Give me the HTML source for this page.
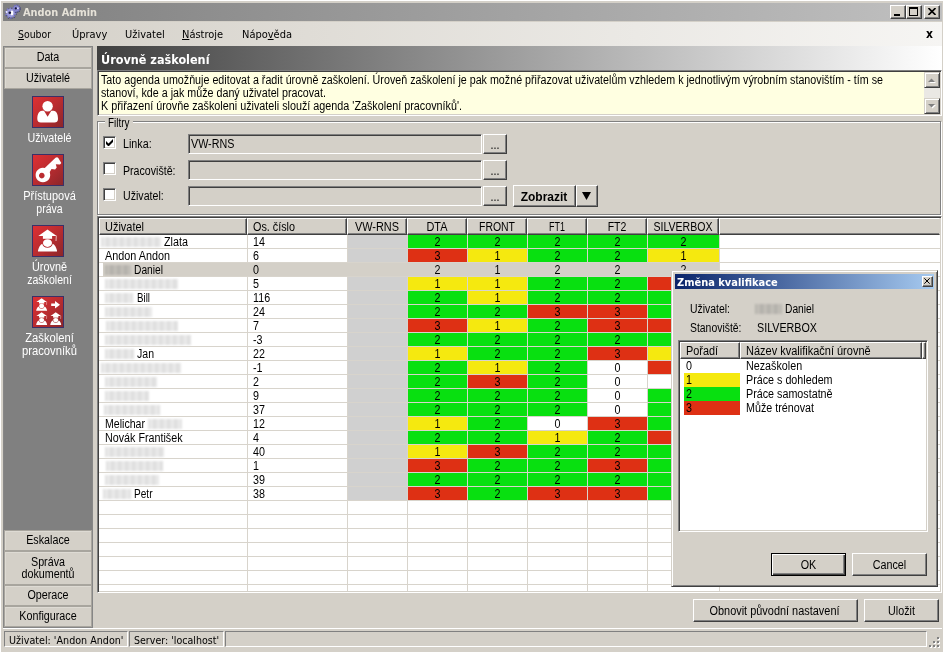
<!DOCTYPE html>
<html><head><meta charset="utf-8"><title>Andon Admin</title>
<style>
html,body{margin:0;padding:0;}
body{width:943px;height:652px;background:#D4D0C8;position:relative;overflow:hidden;font-family:"Liberation Sans","DejaVu Sans",sans-serif;font-size:12px;color:#000;}
div{position:absolute;box-sizing:border-box;}
svg{position:absolute;}
.t{white-space:nowrap;line-height:14px;height:14px;transform-origin:0 50%;}
.t.c{text-align:center;transform-origin:50% 50%;}
.ms{font-family:"Liberation Sans",sans-serif;font-size:12px;}
.msb{font-family:"Liberation Sans",sans-serif;font-size:12px;font-weight:bold;}
.th{font-family:"DejaVu Sans Condensed","Liberation Sans",sans-serif;font-size:11px;}
.thb{font-family:"DejaVu Sans Condensed","Liberation Sans",sans-serif;font-size:11px;font-weight:bold;}
.thb12{font-family:"DejaVu Sans Condensed","Liberation Sans",sans-serif;font-size:12px;font-weight:bold;}
.thb13{font-family:"DejaVu Sans Condensed","Liberation Sans",sans-serif;font-size:13px;font-weight:bold;}
.btn{background:#D4D0C8;border:1px solid;border-color:#fff #404040 #404040 #fff;box-shadow:inset -1px -1px 0 #808080;}
.sunk{border:1px solid;border-color:#808080 #fff #fff #808080;box-shadow:inset 1px 1px 0 #404040, inset -1px -1px 0 #D4D0C8;}
.sbtn{background:#D4D0C8;border:1px solid;border-color:#D4D0C8 #404040 #404040 #D4D0C8;box-shadow:inset 1px 1px 0 #fff, inset -1px -1px 0 #808080;}
.hdr{background:#D4D0C8;border:1px solid;border-color:#fff #404040 #404040 #fff;box-shadow:inset -1px -1px 0 #808080;}
.pbtn{background:#D4D0C8;border:1px solid #A8A59E;box-shadow:inset 1px 1px 0 #DEDBD4;}
.blur{filter:blur(1.3px);}
u{text-decoration:underline;}
</style></head><body>
<div style="left:0px;top:0px;width:943px;height:1px;background:#fff"></div>
<div style="left:0px;top:0px;width:1px;height:652px;background:#fff"></div>
<div style="left:3px;top:3px;width:939px;height:18px;background:linear-gradient(to right,#808080 0%,#C0C0C0 100%)"></div>
<svg style="left:4px;top:4px" width="18" height="16" viewBox="0 0 18 16">
<circle cx="12.7" cy="4.8" r="3.1" fill="none" stroke="#2C2C5C" stroke-width="1.8" stroke-dasharray="1.2 0.75"/>
<circle cx="6.9" cy="9.4" r="4.6" fill="none" stroke="#2C2C5C" stroke-width="2.2" stroke-dasharray="1.6 1.29"/>
<circle cx="12.4" cy="4.4" r="3.1" fill="none" stroke="#7474BC" stroke-width="1.8" stroke-dasharray="1.2 0.75"/>
<circle cx="12.4" cy="4.4" r="2.8" fill="#8888D0"/>
<circle cx="6.6" cy="9" r="4.6" fill="none" stroke="#8080C4" stroke-width="2.2" stroke-dasharray="1.6 1.29"/>
<circle cx="6.6" cy="9" r="4.2" fill="#9898DA"/>
<ellipse cx="7.9" cy="9" rx="1.5" ry="2.4" fill="#fff"/>
<circle cx="2.6" cy="8" r="1" fill="#ECECFF"/>
<circle cx="5.8" cy="8.8" r="1.3" fill="#14143A"/>
<circle cx="11.8" cy="4.4" r="1.1" fill="#14143A"/>
<circle cx="13.9" cy="4.2" r="0.9" fill="#DADAF8"/>
</svg>
<div class="t thb" style="top:6px;color:#E6E2D8;left:23px;transform:scaleX(0.9922);">Andon Admin</div>
<div class="btn" style="left:890px;top:5px;width:16px;height:14px;"></div>
<div class="btn" style="left:906px;top:5px;width:16px;height:14px;"></div>
<div class="btn" style="left:924px;top:5px;width:16px;height:14px;"></div>
<div style="left:894px;top:14px;width:6px;height:2px;background:#000"></div>
<div style="left:909px;top:7px;width:9px;height:9px;border:1px solid #000;border-top:2px solid #000"></div>
<svg style="left:928px;top:8px" width="8" height="7" viewBox="0 0 8 7"><path d="M0.5 0 L7.5 7 M7.5 0 L0.5 7" stroke="#000" stroke-width="1.6"/></svg>
<div style="left:3px;top:22px;width:939px;height:24px;background:linear-gradient(to right,#D4D0C8 0%,#F6F5F3 100%)"></div>
<div class="t th" style="top:28px;left:18px;transform:scaleX(0.9420);"><u>S</u>oubor</div>
<div class="t th" style="top:28px;left:72px;transform:scaleX(0.9980);">Úpravy</div>
<div class="t th" style="top:28px;left:125px;transform:scaleX(0.9980);">Uživatel</div>
<div class="t th" style="top:28px;left:182px;transform:scaleX(0.9980);"><u>N</u>ástroje</div>
<div class="t th" style="top:28px;left:242px;transform:scaleX(0.9980);">Nápo<u>v</u>ěda</div>
<div class="t thb12" style="top:27px;left:926px;transform:scaleX(0.9980);">x</div>
<div style="left:3px;top:46px;width:90px;height:582px;background:#808080;border:1px solid #868686"></div>
<div class="pbtn" style="left:4px;top:47px;width:88px;height:21px;"></div>
<div class="t ms c" style="top:50px;left:4px;width:88px;transform:scaleX(0.8950);">Data</div>
<div class="pbtn" style="left:4px;top:68px;width:88px;height:21px;"></div>
<div class="t ms c" style="top:71px;left:4px;width:88px;transform:scaleX(0.8950);">Uživatelé</div>
<div class="pbtn" style="left:4px;top:530px;width:88px;height:21px;"></div>
<div class="t ms c" style="top:533px;left:4px;width:88px;transform:scaleX(0.8950);">Eskalace</div>
<div class="pbtn" style="left:4px;top:551px;width:88px;height:34px;"></div>
<div class="t ms c" style="top:555px;left:4px;width:88px;transform:scaleX(0.8950);">Správa</div>
<div class="t ms c" style="top:567px;left:4px;width:88px;transform:scaleX(0.8950);">dokumentů</div>
<div class="pbtn" style="left:4px;top:585px;width:88px;height:21px;"></div>
<div class="t ms c" style="top:588px;left:4px;width:88px;transform:scaleX(0.8950);">Operace</div>
<div class="pbtn" style="left:4px;top:606px;width:88px;height:21px;"></div>
<div class="t ms c" style="top:609px;left:4px;width:88px;transform:scaleX(0.8950);">Konfigurace</div>
<div style="left:32px;top:96px;width:32px;height:32px;border:1px solid #3A3068;background:linear-gradient(135deg,#DE3034 0%,#BA2C30 50%,#8C262A 100%)"></div>
<svg style="left:32px;top:96px" width="32" height="32" viewBox="0 0 32 32" fill="#fff"><circle cx="15.6" cy="10.2" r="5.2"/><path d="M5.3 23 C5.3 17.5 7.5 14.8 10 14.8 L12 14.8 L15.6 20.8 L19.3 14.8 L21.5 14.8 C24 14.8 26 17.5 26 23 C26 25.5 24.5 26.5 22.5 26.5 L8.8 26.5 C6.8 26.5 5.3 25.5 5.3 23 Z"/></svg>
<div style="left:32px;top:154px;width:32px;height:32px;border:1px solid #3A3068;background:linear-gradient(135deg,#DE3034 0%,#BA2C30 50%,#8C262A 100%)"></div>
<svg style="left:32px;top:154px" width="32" height="32" viewBox="0 0 32 32" fill="#fff"><path d="M10.9 13.7 a7.3 7.3 0 1 0 0.01 0 Z M9.8 18.8 a2.8 2.8 0 1 1 -0.01 0 Z" fill-rule="evenodd"/><path d="M12.5 14.3 L23.5 3.8 Q25.3 2.5 26.3 4.1 L29.3 9 L28 10.4 L23.8 10.3 L24.7 13.6 L23.1 15.6 L19.5 14.9 L17 19.2 Z"/></svg>
<div style="left:32px;top:225px;width:32px;height:32px;border:1px solid #3A3068;background:linear-gradient(135deg,#DE3034 0%,#BA2C30 50%,#8C262A 100%)"></div>
<svg style="left:32px;top:225px" width="32" height="32" viewBox="0 0 32 32" fill="#fff"><path d="M15.5 4.5 L24.7 10.9 L6.3 10.9 Z"/><rect x="10.9" y="10.9" width="9.2" height="2.9"/><path d="M24.3 10.8 L24 16" stroke="#fff" stroke-opacity="0.75" stroke-width="0.9" fill="none"/><path d="M6 26.5 L6 25.6 C6.8 22 8.2 20 10.2 18.8 A5.5 5.3 0 0 0 20.8 18.8 C22.8 20 24.2 22 25 25.6 L25 26.5 Z"/><ellipse cx="15.5" cy="18.1" rx="4.5" ry="3.9"/></svg>
<div style="left:32px;top:296px;width:32px;height:32px;border:1px solid #3A3068;background:linear-gradient(135deg,#DE3034 0%,#BA2C30 50%,#8C262A 100%)"></div>
<svg style="left:32px;top:296px" width="32" height="32" viewBox="0 0 32 32" fill="#fff"><g transform="translate(0.8,-0.3) scale(0.57)"><path d="M15.5 4.5 L24.7 10.9 L6.3 10.9 Z"/><rect x="10.9" y="10.9" width="9.2" height="2.9"/><path d="M24.3 10.8 L24 16" stroke="#fff" stroke-opacity="0.75" stroke-width="0.9" fill="none"/><path d="M6 26.5 L6 25.6 C6.8 22 8.2 20 10.2 18.8 A5.5 5.3 0 0 0 20.8 18.8 C22.8 20 24.2 22 25 25.6 L25 26.5 Z"/><ellipse cx="15.5" cy="18.1" rx="4.5" ry="3.9"/></g><g transform="translate(0.8,13.8) scale(0.57)"><path d="M15.5 4.5 L24.7 10.9 L6.3 10.9 Z"/><rect x="10.9" y="10.9" width="9.2" height="2.9"/><path d="M24.3 10.8 L24 16" stroke="#fff" stroke-opacity="0.75" stroke-width="0.9" fill="none"/><path d="M6 26.5 L6 25.6 C6.8 22 8.2 20 10.2 18.8 A5.5 5.3 0 0 0 20.8 18.8 C22.8 20 24.2 22 25 25.6 L25 26.5 Z"/><ellipse cx="15.5" cy="18.1" rx="4.5" ry="3.9"/></g><g transform="translate(14.9,13.8) scale(0.57)"><path d="M15.5 4.5 L24.7 10.9 L6.3 10.9 Z"/><rect x="10.9" y="10.9" width="9.2" height="2.9"/><path d="M24.3 10.8 L24 16" stroke="#fff" stroke-opacity="0.75" stroke-width="0.9" fill="none"/><path d="M6 26.5 L6 25.6 C6.8 22 8.2 20 10.2 18.8 A5.5 5.3 0 0 0 20.8 18.8 C22.8 20 24.2 22 25 25.6 L25 26.5 Z"/><ellipse cx="15.5" cy="18.1" rx="4.5" ry="3.9"/></g><path d="M19.2 7.5 L23 7.5 L23 5 L28 8.7 L23 12.4 L23 9.9 L19.2 9.9 Z"/></svg>
<div class="t ms c" style="top:131px;color:#fff;left:5px;width:89px;transform:scaleX(0.8914);">Uživatelé</div>
<div class="t ms c" style="top:189px;color:#fff;left:5px;width:89px;transform:scaleX(0.9168);">Přístupová</div>
<div class="t ms c" style="top:202px;color:#fff;left:5px;width:89px;transform:scaleX(0.8791);">práva</div>
<div class="t ms c" style="top:260px;color:#fff;left:5px;width:89px;transform:scaleX(0.9047);">Úrovně</div>
<div class="t ms c" style="top:273px;color:#fff;left:5px;width:89px;transform:scaleX(0.8816);">zaškolení</div>
<div class="t ms c" style="top:331px;color:#fff;left:5px;width:89px;transform:scaleX(0.9321);">Zaškolení</div>
<div class="t ms c" style="top:344px;color:#fff;left:5px;width:89px;transform:scaleX(0.9369);">pracovníků</div>
<div style="left:97px;top:46px;width:845px;height:24px;background:linear-gradient(to right,#404040 0%,#FFFFFF 100%)"></div>
<div class="t thb13" style="top:53px;color:#fff;left:101px;transform:scaleX(0.9631);">Úrovně zaškolení</div>
<div class="sunk" style="left:97px;top:70px;width:845px;height:46px;background:#FFFFE1;"></div>
<div class="t ms" style="top:73px;left:101px;transform:scaleX(0.8929);">Tato agenda umožňuje editovat a řadit úrovně zaškolení. Úroveň zaškolení je pak možné přiřazovat uživatelům vzhledem k jednotlivým výrobním stanovištím - tím se</div>
<div class="t ms" style="top:86px;left:101px;transform:scaleX(0.8924);">stanoví, kde a jak může daný uživatel pracovat.</div>
<div class="t ms" style="top:99px;left:101px;transform:scaleX(0.8992);">K přiřazení úrovňe zaškoleni uživateli slouží agenda 'Zaškolení pracovníků'.</div>
<div style="left:924px;top:72px;width:16px;height:42px;background:#EAE8E4"></div>
<div class="sbtn" style="left:924px;top:72px;width:16px;height:16px;"></div>
<div class="sbtn" style="left:924px;top:98px;width:16px;height:16px;"></div>
<svg style="left:928px;top:78px" width="9" height="5" viewBox="0 0 9 5"><path d="M1.5 5 L4.5 2 L8 5 Z" fill="#fff"/><path d="M0 4 L3.5 0.5 L7 4 Z" fill="#808080"/></svg>
<svg style="left:928px;top:104px" width="9" height="5" viewBox="0 0 9 5"><path d="M1 1 L8 1 L4.5 4.5 Z" fill="#fff"/><path d="M0 0 L7 0 L3.5 3.5 Z" fill="#808080"/></svg>
<div style="left:97px;top:121px;width:844px;height:94px;border:1px solid #808080;box-shadow:1px 1px 0 #fff, inset 1px 1px 0 #fff;"></div>
<div style="left:105px;top:116px;width:28px;height:13px;background:#D4D0C8"></div>
<div class="t ms" style="top:116px;left:108px;transform:scaleX(0.8269);">Filtry</div>
<div class="sunk" style="left:103px;top:136px;width:13px;height:13px;background:#fff;"></div>
<svg style="left:106px;top:139px" width="7" height="7" viewBox="0 0 7 7"><path d="M0 2 L0 5 L2 7 L3 7 L7 3 L7 0 L2.5 4.5 Z" fill="#000"/></svg>
<div class="t ms" style="top:137px;left:123px;transform:scaleX(0.8950);">Linka:</div>
<div class="sunk" style="left:188px;top:134px;width:294px;height:20px;background:#D4D0C8;"></div>
<div class="t ms" style="top:137px;left:191px;transform:scaleX(0.8950);">VW-RNS</div>
<div class="btn" style="left:483px;top:134px;width:24px;height:20px;"></div>
<div class="t ms c" style="top:138px;left:483px;width:24px;transform:scaleX(0.8950);">...</div>
<div class="sunk" style="left:103px;top:162px;width:13px;height:13px;background:#fff;"></div>
<div class="t ms" style="top:164px;left:123px;transform:scaleX(0.8844);">Pracoviště:</div>
<div class="sunk" style="left:188px;top:160px;width:294px;height:20px;background:#D4D0C8;"></div>
<div class="btn" style="left:483px;top:160px;width:24px;height:20px;"></div>
<div class="t ms c" style="top:164px;left:483px;width:24px;transform:scaleX(0.8950);">...</div>
<div class="sunk" style="left:103px;top:188px;width:13px;height:13px;background:#fff;"></div>
<div class="t ms" style="top:189px;left:123px;transform:scaleX(0.8845);">Uživatel:</div>
<div class="sunk" style="left:188px;top:186px;width:294px;height:20px;background:#D4D0C8;"></div>
<div class="btn" style="left:483px;top:186px;width:24px;height:20px;"></div>
<div class="t ms c" style="top:190px;left:483px;width:24px;transform:scaleX(0.8950);">...</div>
<div class="btn" style="left:513px;top:185px;width:63px;height:22px;"></div>
<div class="t msb c" style="top:190px;left:513px;width:62px;transform:scaleX(0.9980);">Zobrazit</div>
<div class="btn" style="left:576px;top:185px;width:22px;height:22px;"></div>
<svg style="left:582px;top:192px" width="9" height="8" viewBox="0 0 9 8"><path d="M0 0 L9 0 L4.5 8 Z" fill="#000"/></svg>
<div class="sunk" style="left:97px;top:216px;width:845px;height:377px;background:#fff;"></div>
<div class="hdr" style="left:99px;top:218px;width:148px;height:17px;"></div>
<div class="t ms" style="top:220px;left:105px;transform:scaleX(0.9136);">Uživatel</div>
<div class="hdr" style="left:247px;top:218px;width:100px;height:17px;"></div>
<div class="t ms" style="top:220px;left:253px;transform:scaleX(0.8996);">Os. číslo</div>
<div class="hdr" style="left:347px;top:218px;width:60px;height:17px;"></div>
<div class="t ms c" style="top:220px;left:347px;width:60px;transform:scaleX(0.9081);">VW-RNS</div>
<div class="hdr" style="left:407px;top:218px;width:60px;height:17px;"></div>
<div class="t ms c" style="top:220px;left:407px;width:60px;transform:scaleX(0.9087);">DTA</div>
<div class="hdr" style="left:467px;top:218px;width:60px;height:17px;"></div>
<div class="t ms c" style="top:220px;left:467px;width:60px;transform:scaleX(0.8711);">FRONT</div>
<div class="hdr" style="left:527px;top:218px;width:60px;height:17px;"></div>
<div class="t ms c" style="top:220px;left:527px;width:60px;transform:scaleX(0.7496);">FT1</div>
<div class="hdr" style="left:587px;top:218px;width:60px;height:17px;"></div>
<div class="t ms c" style="top:220px;left:587px;width:60px;transform:scaleX(0.8761);">FT2</div>
<div class="hdr" style="left:647px;top:218px;width:72px;height:17px;"></div>
<div class="t ms c" style="top:220px;left:647px;width:72px;transform:scaleX(0.8788);">SILVERBOX</div>
<div class="hdr" style="left:719px;top:218px;width:221px;height:17px;border-right-color:#D4D0C8;box-shadow:inset 0 -1px 0 #808080;"></div>
<div style="left:99px;top:248px;width:841px;height:1px;background:#D8D4CC"></div>
<div style="left:99px;top:262px;width:841px;height:1px;background:#D8D4CC"></div>
<div style="left:99px;top:276px;width:841px;height:1px;background:#D8D4CC"></div>
<div style="left:99px;top:290px;width:841px;height:1px;background:#D8D4CC"></div>
<div style="left:99px;top:304px;width:841px;height:1px;background:#D8D4CC"></div>
<div style="left:99px;top:318px;width:841px;height:1px;background:#D8D4CC"></div>
<div style="left:99px;top:332px;width:841px;height:1px;background:#D8D4CC"></div>
<div style="left:99px;top:346px;width:841px;height:1px;background:#D8D4CC"></div>
<div style="left:99px;top:360px;width:841px;height:1px;background:#D8D4CC"></div>
<div style="left:99px;top:374px;width:841px;height:1px;background:#D8D4CC"></div>
<div style="left:99px;top:388px;width:841px;height:1px;background:#D8D4CC"></div>
<div style="left:99px;top:402px;width:841px;height:1px;background:#D8D4CC"></div>
<div style="left:99px;top:416px;width:841px;height:1px;background:#D8D4CC"></div>
<div style="left:99px;top:430px;width:841px;height:1px;background:#D8D4CC"></div>
<div style="left:99px;top:444px;width:841px;height:1px;background:#D8D4CC"></div>
<div style="left:99px;top:458px;width:841px;height:1px;background:#D8D4CC"></div>
<div style="left:99px;top:472px;width:841px;height:1px;background:#D8D4CC"></div>
<div style="left:99px;top:486px;width:841px;height:1px;background:#D8D4CC"></div>
<div style="left:99px;top:500px;width:841px;height:1px;background:#D8D4CC"></div>
<div style="left:99px;top:514px;width:841px;height:1px;background:#D8D4CC"></div>
<div style="left:99px;top:528px;width:841px;height:1px;background:#D8D4CC"></div>
<div style="left:99px;top:542px;width:841px;height:1px;background:#D8D4CC"></div>
<div style="left:99px;top:556px;width:841px;height:1px;background:#D8D4CC"></div>
<div style="left:99px;top:570px;width:841px;height:1px;background:#D8D4CC"></div>
<div style="left:99px;top:584px;width:841px;height:1px;background:#D8D4CC"></div>
<div style="left:247px;top:235px;width:1px;height:356px;background:#D8D4CC"></div>
<div style="left:347px;top:235px;width:1px;height:356px;background:#D8D4CC"></div>
<div style="left:407px;top:235px;width:1px;height:356px;background:#D8D4CC"></div>
<div style="left:467px;top:235px;width:1px;height:356px;background:#D8D4CC"></div>
<div style="left:527px;top:235px;width:1px;height:356px;background:#D8D4CC"></div>
<div style="left:587px;top:235px;width:1px;height:356px;background:#D8D4CC"></div>
<div style="left:647px;top:235px;width:1px;height:356px;background:#D8D4CC"></div>
<div style="left:719px;top:235px;width:1px;height:356px;background:#D8D4CC"></div>
<div style="left:348px;top:235px;width:59px;height:13px;background:#D0D0D0"></div>
<div class="blur" style="left:101px;top:237px;width:60px;height:10px;background:repeating-linear-gradient(90deg,#DCDCDC 0,#ECECEC 3px,#DCDCDC 7px);"></div>
<div class="t ms" style="top:235px;left:164px;transform:scaleX(0.8993);">Zlata</div>
<div class="t ms" style="top:235px;left:253px;transform:scaleX(0.8950);">14</div>
<div style="left:408px;top:235px;width:59px;height:13px;background:#08E010"></div>
<div class="t ms c" style="top:235px;left:408px;width:59px;transform:scaleX(0.8950);">2</div>
<div style="left:468px;top:235px;width:59px;height:13px;background:#08E010"></div>
<div class="t ms c" style="top:235px;left:468px;width:59px;transform:scaleX(0.8950);">2</div>
<div style="left:528px;top:235px;width:59px;height:13px;background:#08E010"></div>
<div class="t ms c" style="top:235px;left:528px;width:59px;transform:scaleX(0.8950);">2</div>
<div style="left:588px;top:235px;width:59px;height:13px;background:#08E010"></div>
<div class="t ms c" style="top:235px;left:588px;width:59px;transform:scaleX(0.8950);">2</div>
<div style="left:648px;top:235px;width:71px;height:13px;background:#08E010"></div>
<div class="t ms c" style="top:235px;left:648px;width:71px;transform:scaleX(0.8950);">2</div>
<div style="left:348px;top:249px;width:59px;height:13px;background:#D0D0D0"></div>
<div class="t ms" style="top:249px;left:105px;transform:scaleX(0.9018);">Andon Andon</div>
<div class="t ms" style="top:249px;left:253px;transform:scaleX(0.8950);">6</div>
<div style="left:408px;top:249px;width:59px;height:13px;background:#DE3014"></div>
<div class="t ms c" style="top:249px;left:408px;width:59px;transform:scaleX(0.8950);">3</div>
<div style="left:468px;top:249px;width:59px;height:13px;background:#F5E90F"></div>
<div class="t ms c" style="top:249px;left:468px;width:59px;transform:scaleX(0.8950);">1</div>
<div style="left:528px;top:249px;width:59px;height:13px;background:#08E010"></div>
<div class="t ms c" style="top:249px;left:528px;width:59px;transform:scaleX(0.8950);">2</div>
<div style="left:588px;top:249px;width:59px;height:13px;background:#08E010"></div>
<div class="t ms c" style="top:249px;left:588px;width:59px;transform:scaleX(0.8950);">2</div>
<div style="left:648px;top:249px;width:71px;height:13px;background:#F5E90F"></div>
<div class="t ms c" style="top:249px;left:648px;width:71px;transform:scaleX(0.8950);">1</div>
<div style="left:103px;top:263px;width:616px;height:13px;background:#D4D0C8"></div>
<div class="blur" style="left:105px;top:265px;width:26px;height:10px;background:repeating-linear-gradient(90deg,#B0AEA8 0,#C4C1BA 3px,#B0AEA8 7px);"></div>
<div class="t ms" style="top:263px;left:134px;transform:scaleX(0.8522);">Daniel</div>
<div class="t ms" style="top:263px;left:253px;transform:scaleX(0.8950);">0</div>
<div class="t ms c" style="top:263px;left:408px;width:59px;transform:scaleX(0.8950);">2</div>
<div class="t ms c" style="top:263px;left:468px;width:59px;transform:scaleX(0.8950);">1</div>
<div class="t ms c" style="top:263px;left:528px;width:59px;transform:scaleX(0.8950);">2</div>
<div class="t ms c" style="top:263px;left:588px;width:59px;transform:scaleX(0.8950);">2</div>
<div class="t ms c" style="top:263px;left:648px;width:71px;transform:scaleX(0.8950);">2</div>
<div style="left:348px;top:277px;width:59px;height:13px;background:#D0D0D0"></div>
<div class="blur" style="left:105px;top:279px;width:73px;height:10px;background:repeating-linear-gradient(90deg,#DCDCDC 0,#ECECEC 3px,#DCDCDC 7px);"></div>
<div class="t ms" style="top:277px;left:253px;transform:scaleX(0.8950);">5</div>
<div style="left:408px;top:277px;width:59px;height:13px;background:#F5E90F"></div>
<div class="t ms c" style="top:277px;left:408px;width:59px;transform:scaleX(0.8950);">1</div>
<div style="left:468px;top:277px;width:59px;height:13px;background:#F5E90F"></div>
<div class="t ms c" style="top:277px;left:468px;width:59px;transform:scaleX(0.8950);">1</div>
<div style="left:528px;top:277px;width:59px;height:13px;background:#08E010"></div>
<div class="t ms c" style="top:277px;left:528px;width:59px;transform:scaleX(0.8950);">2</div>
<div style="left:588px;top:277px;width:59px;height:13px;background:#08E010"></div>
<div class="t ms c" style="top:277px;left:588px;width:59px;transform:scaleX(0.8950);">2</div>
<div style="left:648px;top:277px;width:71px;height:13px;background:#DE3014"></div>
<div class="t ms c" style="top:277px;left:648px;width:71px;transform:scaleX(0.8950);">3</div>
<div style="left:348px;top:291px;width:59px;height:13px;background:#D0D0D0"></div>
<div class="blur" style="left:105px;top:293px;width:28px;height:10px;background:repeating-linear-gradient(90deg,#DCDCDC 0,#ECECEC 3px,#DCDCDC 7px);"></div>
<div class="t ms" style="top:291px;left:137px;transform:scaleX(0.8117);">Bill</div>
<div class="t ms" style="top:291px;left:253px;transform:scaleX(0.8950);">116</div>
<div style="left:408px;top:291px;width:59px;height:13px;background:#08E010"></div>
<div class="t ms c" style="top:291px;left:408px;width:59px;transform:scaleX(0.8950);">2</div>
<div style="left:468px;top:291px;width:59px;height:13px;background:#F5E90F"></div>
<div class="t ms c" style="top:291px;left:468px;width:59px;transform:scaleX(0.8950);">1</div>
<div style="left:528px;top:291px;width:59px;height:13px;background:#08E010"></div>
<div class="t ms c" style="top:291px;left:528px;width:59px;transform:scaleX(0.8950);">2</div>
<div style="left:588px;top:291px;width:59px;height:13px;background:#08E010"></div>
<div class="t ms c" style="top:291px;left:588px;width:59px;transform:scaleX(0.8950);">2</div>
<div style="left:648px;top:291px;width:71px;height:13px;background:#08E010"></div>
<div class="t ms c" style="top:291px;left:648px;width:71px;transform:scaleX(0.8950);">2</div>
<div style="left:348px;top:305px;width:59px;height:13px;background:#D0D0D0"></div>
<div class="blur" style="left:105px;top:307px;width:47px;height:10px;background:repeating-linear-gradient(90deg,#DCDCDC 0,#ECECEC 3px,#DCDCDC 7px);"></div>
<div class="t ms" style="top:305px;left:253px;transform:scaleX(0.8950);">24</div>
<div style="left:408px;top:305px;width:59px;height:13px;background:#08E010"></div>
<div class="t ms c" style="top:305px;left:408px;width:59px;transform:scaleX(0.8950);">2</div>
<div style="left:468px;top:305px;width:59px;height:13px;background:#08E010"></div>
<div class="t ms c" style="top:305px;left:468px;width:59px;transform:scaleX(0.8950);">2</div>
<div style="left:528px;top:305px;width:59px;height:13px;background:#DE3014"></div>
<div class="t ms c" style="top:305px;left:528px;width:59px;transform:scaleX(0.8950);">3</div>
<div style="left:588px;top:305px;width:59px;height:13px;background:#DE3014"></div>
<div class="t ms c" style="top:305px;left:588px;width:59px;transform:scaleX(0.8950);">3</div>
<div style="left:648px;top:305px;width:71px;height:13px;background:#08E010"></div>
<div class="t ms c" style="top:305px;left:648px;width:71px;transform:scaleX(0.8950);">2</div>
<div style="left:348px;top:319px;width:59px;height:13px;background:#D0D0D0"></div>
<div class="blur" style="left:106px;top:321px;width:72px;height:10px;background:repeating-linear-gradient(90deg,#DCDCDC 0,#ECECEC 3px,#DCDCDC 7px);"></div>
<div class="t ms" style="top:319px;left:253px;transform:scaleX(0.8950);">7</div>
<div style="left:408px;top:319px;width:59px;height:13px;background:#DE3014"></div>
<div class="t ms c" style="top:319px;left:408px;width:59px;transform:scaleX(0.8950);">3</div>
<div style="left:468px;top:319px;width:59px;height:13px;background:#F5E90F"></div>
<div class="t ms c" style="top:319px;left:468px;width:59px;transform:scaleX(0.8950);">1</div>
<div style="left:528px;top:319px;width:59px;height:13px;background:#08E010"></div>
<div class="t ms c" style="top:319px;left:528px;width:59px;transform:scaleX(0.8950);">2</div>
<div style="left:588px;top:319px;width:59px;height:13px;background:#DE3014"></div>
<div class="t ms c" style="top:319px;left:588px;width:59px;transform:scaleX(0.8950);">3</div>
<div style="left:648px;top:319px;width:71px;height:13px;background:#DE3014"></div>
<div class="t ms c" style="top:319px;left:648px;width:71px;transform:scaleX(0.8950);">3</div>
<div style="left:348px;top:333px;width:59px;height:13px;background:#D0D0D0"></div>
<div class="blur" style="left:105px;top:335px;width:86px;height:10px;background:repeating-linear-gradient(90deg,#DCDCDC 0,#ECECEC 3px,#DCDCDC 7px);"></div>
<div class="t ms" style="top:333px;left:253px;transform:scaleX(0.8950);">-3</div>
<div style="left:408px;top:333px;width:59px;height:13px;background:#08E010"></div>
<div class="t ms c" style="top:333px;left:408px;width:59px;transform:scaleX(0.8950);">2</div>
<div style="left:468px;top:333px;width:59px;height:13px;background:#08E010"></div>
<div class="t ms c" style="top:333px;left:468px;width:59px;transform:scaleX(0.8950);">2</div>
<div style="left:528px;top:333px;width:59px;height:13px;background:#08E010"></div>
<div class="t ms c" style="top:333px;left:528px;width:59px;transform:scaleX(0.8950);">2</div>
<div style="left:588px;top:333px;width:59px;height:13px;background:#08E010"></div>
<div class="t ms c" style="top:333px;left:588px;width:59px;transform:scaleX(0.8950);">2</div>
<div style="left:648px;top:333px;width:71px;height:13px;background:#08E010"></div>
<div class="t ms c" style="top:333px;left:648px;width:71px;transform:scaleX(0.8950);">2</div>
<div style="left:348px;top:347px;width:59px;height:13px;background:#D0D0D0"></div>
<div class="blur" style="left:105px;top:349px;width:29px;height:10px;background:repeating-linear-gradient(90deg,#DCDCDC 0,#ECECEC 3px,#DCDCDC 7px);"></div>
<div class="t ms" style="top:347px;left:137px;transform:scaleX(0.8781);">Jan</div>
<div class="t ms" style="top:347px;left:253px;transform:scaleX(0.8950);">22</div>
<div style="left:408px;top:347px;width:59px;height:13px;background:#F5E90F"></div>
<div class="t ms c" style="top:347px;left:408px;width:59px;transform:scaleX(0.8950);">1</div>
<div style="left:468px;top:347px;width:59px;height:13px;background:#08E010"></div>
<div class="t ms c" style="top:347px;left:468px;width:59px;transform:scaleX(0.8950);">2</div>
<div style="left:528px;top:347px;width:59px;height:13px;background:#08E010"></div>
<div class="t ms c" style="top:347px;left:528px;width:59px;transform:scaleX(0.8950);">2</div>
<div style="left:588px;top:347px;width:59px;height:13px;background:#DE3014"></div>
<div class="t ms c" style="top:347px;left:588px;width:59px;transform:scaleX(0.8950);">3</div>
<div style="left:648px;top:347px;width:71px;height:13px;background:#F5E90F"></div>
<div class="t ms c" style="top:347px;left:648px;width:71px;transform:scaleX(0.8950);">1</div>
<div style="left:348px;top:361px;width:59px;height:13px;background:#D0D0D0"></div>
<div class="blur" style="left:101px;top:363px;width:80px;height:10px;background:repeating-linear-gradient(90deg,#DCDCDC 0,#ECECEC 3px,#DCDCDC 7px);"></div>
<div class="t ms" style="top:361px;left:253px;transform:scaleX(0.8950);">-1</div>
<div style="left:408px;top:361px;width:59px;height:13px;background:#08E010"></div>
<div class="t ms c" style="top:361px;left:408px;width:59px;transform:scaleX(0.8950);">2</div>
<div style="left:468px;top:361px;width:59px;height:13px;background:#F5E90F"></div>
<div class="t ms c" style="top:361px;left:468px;width:59px;transform:scaleX(0.8950);">1</div>
<div style="left:528px;top:361px;width:59px;height:13px;background:#08E010"></div>
<div class="t ms c" style="top:361px;left:528px;width:59px;transform:scaleX(0.8950);">2</div>
<div class="t ms c" style="top:361px;left:588px;width:59px;transform:scaleX(0.8950);">0</div>
<div style="left:648px;top:361px;width:71px;height:13px;background:#DE3014"></div>
<div class="t ms c" style="top:361px;left:648px;width:71px;transform:scaleX(0.8950);">3</div>
<div style="left:348px;top:375px;width:59px;height:13px;background:#D0D0D0"></div>
<div class="blur" style="left:105px;top:377px;width:52px;height:10px;background:repeating-linear-gradient(90deg,#DCDCDC 0,#ECECEC 3px,#DCDCDC 7px);"></div>
<div class="t ms" style="top:375px;left:253px;transform:scaleX(0.8950);">2</div>
<div style="left:408px;top:375px;width:59px;height:13px;background:#08E010"></div>
<div class="t ms c" style="top:375px;left:408px;width:59px;transform:scaleX(0.8950);">2</div>
<div style="left:468px;top:375px;width:59px;height:13px;background:#DE3014"></div>
<div class="t ms c" style="top:375px;left:468px;width:59px;transform:scaleX(0.8950);">3</div>
<div style="left:528px;top:375px;width:59px;height:13px;background:#08E010"></div>
<div class="t ms c" style="top:375px;left:528px;width:59px;transform:scaleX(0.8950);">2</div>
<div class="t ms c" style="top:375px;left:588px;width:59px;transform:scaleX(0.8950);">0</div>
<div style="left:348px;top:389px;width:59px;height:13px;background:#D0D0D0"></div>
<div class="blur" style="left:105px;top:391px;width:44px;height:10px;background:repeating-linear-gradient(90deg,#DCDCDC 0,#ECECEC 3px,#DCDCDC 7px);"></div>
<div class="t ms" style="top:389px;left:253px;transform:scaleX(0.8950);">9</div>
<div style="left:408px;top:389px;width:59px;height:13px;background:#08E010"></div>
<div class="t ms c" style="top:389px;left:408px;width:59px;transform:scaleX(0.8950);">2</div>
<div style="left:468px;top:389px;width:59px;height:13px;background:#08E010"></div>
<div class="t ms c" style="top:389px;left:468px;width:59px;transform:scaleX(0.8950);">2</div>
<div style="left:528px;top:389px;width:59px;height:13px;background:#08E010"></div>
<div class="t ms c" style="top:389px;left:528px;width:59px;transform:scaleX(0.8950);">2</div>
<div class="t ms c" style="top:389px;left:588px;width:59px;transform:scaleX(0.8950);">0</div>
<div style="left:648px;top:389px;width:71px;height:13px;background:#08E010"></div>
<div class="t ms c" style="top:389px;left:648px;width:71px;transform:scaleX(0.8950);">2</div>
<div style="left:348px;top:403px;width:59px;height:13px;background:#D0D0D0"></div>
<div class="blur" style="left:104px;top:405px;width:56px;height:10px;background:repeating-linear-gradient(90deg,#DCDCDC 0,#ECECEC 3px,#DCDCDC 7px);"></div>
<div class="t ms" style="top:403px;left:253px;transform:scaleX(0.8950);">37</div>
<div style="left:408px;top:403px;width:59px;height:13px;background:#08E010"></div>
<div class="t ms c" style="top:403px;left:408px;width:59px;transform:scaleX(0.8950);">2</div>
<div style="left:468px;top:403px;width:59px;height:13px;background:#08E010"></div>
<div class="t ms c" style="top:403px;left:468px;width:59px;transform:scaleX(0.8950);">2</div>
<div style="left:528px;top:403px;width:59px;height:13px;background:#08E010"></div>
<div class="t ms c" style="top:403px;left:528px;width:59px;transform:scaleX(0.8950);">2</div>
<div class="t ms c" style="top:403px;left:588px;width:59px;transform:scaleX(0.8950);">0</div>
<div style="left:648px;top:403px;width:71px;height:13px;background:#08E010"></div>
<div class="t ms c" style="top:403px;left:648px;width:71px;transform:scaleX(0.8950);">2</div>
<div style="left:348px;top:417px;width:59px;height:13px;background:#D0D0D0"></div>
<div class="t ms" style="top:417px;left:105px;transform:scaleX(0.8818);">Melichar</div>
<div class="blur" style="left:148px;top:419px;width:34px;height:10px;background:repeating-linear-gradient(90deg,#DCDCDC 0,#ECECEC 3px,#DCDCDC 7px);"></div>
<div class="t ms" style="top:417px;left:253px;transform:scaleX(0.8950);">12</div>
<div style="left:408px;top:417px;width:59px;height:13px;background:#F5E90F"></div>
<div class="t ms c" style="top:417px;left:408px;width:59px;transform:scaleX(0.8950);">1</div>
<div style="left:468px;top:417px;width:59px;height:13px;background:#08E010"></div>
<div class="t ms c" style="top:417px;left:468px;width:59px;transform:scaleX(0.8950);">2</div>
<div class="t ms c" style="top:417px;left:528px;width:59px;transform:scaleX(0.8950);">0</div>
<div style="left:588px;top:417px;width:59px;height:13px;background:#DE3014"></div>
<div class="t ms c" style="top:417px;left:588px;width:59px;transform:scaleX(0.8950);">3</div>
<div style="left:648px;top:417px;width:71px;height:13px;background:#08E010"></div>
<div class="t ms c" style="top:417px;left:648px;width:71px;transform:scaleX(0.8950);">2</div>
<div style="left:348px;top:431px;width:59px;height:13px;background:#D0D0D0"></div>
<div class="t ms" style="top:431px;left:105px;transform:scaleX(0.8939);">Novák František</div>
<div class="t ms" style="top:431px;left:253px;transform:scaleX(0.8950);">4</div>
<div style="left:408px;top:431px;width:59px;height:13px;background:#08E010"></div>
<div class="t ms c" style="top:431px;left:408px;width:59px;transform:scaleX(0.8950);">2</div>
<div style="left:468px;top:431px;width:59px;height:13px;background:#08E010"></div>
<div class="t ms c" style="top:431px;left:468px;width:59px;transform:scaleX(0.8950);">2</div>
<div style="left:528px;top:431px;width:59px;height:13px;background:#F5E90F"></div>
<div class="t ms c" style="top:431px;left:528px;width:59px;transform:scaleX(0.8950);">1</div>
<div style="left:588px;top:431px;width:59px;height:13px;background:#08E010"></div>
<div class="t ms c" style="top:431px;left:588px;width:59px;transform:scaleX(0.8950);">2</div>
<div style="left:648px;top:431px;width:71px;height:13px;background:#DE3014"></div>
<div class="t ms c" style="top:431px;left:648px;width:71px;transform:scaleX(0.8950);">3</div>
<div style="left:348px;top:445px;width:59px;height:13px;background:#D0D0D0"></div>
<div class="blur" style="left:105px;top:447px;width:59px;height:10px;background:repeating-linear-gradient(90deg,#DCDCDC 0,#ECECEC 3px,#DCDCDC 7px);"></div>
<div class="t ms" style="top:445px;left:253px;transform:scaleX(0.8950);">40</div>
<div style="left:408px;top:445px;width:59px;height:13px;background:#F5E90F"></div>
<div class="t ms c" style="top:445px;left:408px;width:59px;transform:scaleX(0.8950);">1</div>
<div style="left:468px;top:445px;width:59px;height:13px;background:#DE3014"></div>
<div class="t ms c" style="top:445px;left:468px;width:59px;transform:scaleX(0.8950);">3</div>
<div style="left:528px;top:445px;width:59px;height:13px;background:#08E010"></div>
<div class="t ms c" style="top:445px;left:528px;width:59px;transform:scaleX(0.8950);">2</div>
<div style="left:588px;top:445px;width:59px;height:13px;background:#08E010"></div>
<div class="t ms c" style="top:445px;left:588px;width:59px;transform:scaleX(0.8950);">2</div>
<div style="left:648px;top:445px;width:71px;height:13px;background:#08E010"></div>
<div class="t ms c" style="top:445px;left:648px;width:71px;transform:scaleX(0.8950);">2</div>
<div style="left:348px;top:459px;width:59px;height:13px;background:#D0D0D0"></div>
<div class="blur" style="left:106px;top:461px;width:57px;height:10px;background:repeating-linear-gradient(90deg,#DCDCDC 0,#ECECEC 3px,#DCDCDC 7px);"></div>
<div class="t ms" style="top:459px;left:253px;transform:scaleX(0.8950);">1</div>
<div style="left:408px;top:459px;width:59px;height:13px;background:#DE3014"></div>
<div class="t ms c" style="top:459px;left:408px;width:59px;transform:scaleX(0.8950);">3</div>
<div style="left:468px;top:459px;width:59px;height:13px;background:#08E010"></div>
<div class="t ms c" style="top:459px;left:468px;width:59px;transform:scaleX(0.8950);">2</div>
<div style="left:528px;top:459px;width:59px;height:13px;background:#08E010"></div>
<div class="t ms c" style="top:459px;left:528px;width:59px;transform:scaleX(0.8950);">2</div>
<div style="left:588px;top:459px;width:59px;height:13px;background:#DE3014"></div>
<div class="t ms c" style="top:459px;left:588px;width:59px;transform:scaleX(0.8950);">3</div>
<div style="left:648px;top:459px;width:71px;height:13px;background:#08E010"></div>
<div class="t ms c" style="top:459px;left:648px;width:71px;transform:scaleX(0.8950);">2</div>
<div style="left:348px;top:473px;width:59px;height:13px;background:#D0D0D0"></div>
<div class="blur" style="left:105px;top:475px;width:54px;height:10px;background:repeating-linear-gradient(90deg,#DCDCDC 0,#ECECEC 3px,#DCDCDC 7px);"></div>
<div class="t ms" style="top:473px;left:253px;transform:scaleX(0.8950);">39</div>
<div style="left:408px;top:473px;width:59px;height:13px;background:#08E010"></div>
<div class="t ms c" style="top:473px;left:408px;width:59px;transform:scaleX(0.8950);">2</div>
<div style="left:468px;top:473px;width:59px;height:13px;background:#08E010"></div>
<div class="t ms c" style="top:473px;left:468px;width:59px;transform:scaleX(0.8950);">2</div>
<div style="left:528px;top:473px;width:59px;height:13px;background:#08E010"></div>
<div class="t ms c" style="top:473px;left:528px;width:59px;transform:scaleX(0.8950);">2</div>
<div style="left:588px;top:473px;width:59px;height:13px;background:#08E010"></div>
<div class="t ms c" style="top:473px;left:588px;width:59px;transform:scaleX(0.8950);">2</div>
<div style="left:648px;top:473px;width:71px;height:13px;background:#08E010"></div>
<div class="t ms c" style="top:473px;left:648px;width:71px;transform:scaleX(0.8950);">2</div>
<div style="left:348px;top:487px;width:59px;height:13px;background:#D0D0D0"></div>
<div class="blur" style="left:103px;top:489px;width:28px;height:10px;background:repeating-linear-gradient(90deg,#DCDCDC 0,#ECECEC 3px,#DCDCDC 7px);"></div>
<div class="t ms" style="top:487px;left:134px;transform:scaleX(0.8403);">Petr</div>
<div class="t ms" style="top:487px;left:253px;transform:scaleX(0.8950);">38</div>
<div style="left:408px;top:487px;width:59px;height:13px;background:#DE3014"></div>
<div class="t ms c" style="top:487px;left:408px;width:59px;transform:scaleX(0.8950);">3</div>
<div style="left:468px;top:487px;width:59px;height:13px;background:#08E010"></div>
<div class="t ms c" style="top:487px;left:468px;width:59px;transform:scaleX(0.8950);">2</div>
<div style="left:528px;top:487px;width:59px;height:13px;background:#DE3014"></div>
<div class="t ms c" style="top:487px;left:528px;width:59px;transform:scaleX(0.8950);">3</div>
<div style="left:588px;top:487px;width:59px;height:13px;background:#DE3014"></div>
<div class="t ms c" style="top:487px;left:588px;width:59px;transform:scaleX(0.8950);">3</div>
<div style="left:648px;top:487px;width:71px;height:13px;background:#08E010"></div>
<div class="t ms c" style="top:487px;left:648px;width:71px;transform:scaleX(0.8950);">2</div>
<div class="btn" style="left:693px;top:599px;width:165px;height:23px;"></div>
<div class="t ms c" style="top:604px;left:692px;width:165px;transform:scaleX(0.9106);">Obnovit původní nastavení</div>
<div class="btn" style="left:864px;top:599px;width:75px;height:23px;"></div>
<div class="t ms c" style="top:604px;left:864px;width:75px;transform:scaleX(0.8950);">Uložit</div>
<div style="left:3px;top:628px;width:939px;height:1px;background:#fff"></div>
<div style="left:4px;top:631px;width:124px;height:16px;border:1px solid;border-color:#808080 #fff #fff #808080"></div>
<div style="left:129px;top:631px;width:95px;height:16px;border:1px solid;border-color:#808080 #fff #fff #808080"></div>
<div style="left:225px;top:631px;width:702px;height:16px;border:1px solid;border-color:#808080 #fff #fff #808080"></div>
<div class="t th" style="top:634px;left:9.3px;transform:scaleX(0.9688);">Uživatel: 'Andon Andon'</div>
<div class="t th" style="top:634px;left:134px;transform:scaleX(0.9594);">Server: 'localhost'</div>
<div style="left:938px;top:638px;width:2px;height:2px;background:#fff"></div>
<div style="left:937px;top:637px;width:2px;height:2px;background:#808080"></div>
<div style="left:934px;top:642px;width:2px;height:2px;background:#fff"></div>
<div style="left:933px;top:641px;width:2px;height:2px;background:#808080"></div>
<div style="left:938px;top:642px;width:2px;height:2px;background:#fff"></div>
<div style="left:937px;top:641px;width:2px;height:2px;background:#808080"></div>
<div style="left:930px;top:646px;width:2px;height:2px;background:#fff"></div>
<div style="left:929px;top:645px;width:2px;height:2px;background:#808080"></div>
<div style="left:934px;top:646px;width:2px;height:2px;background:#fff"></div>
<div style="left:933px;top:645px;width:2px;height:2px;background:#808080"></div>
<div style="left:938px;top:646px;width:2px;height:2px;background:#fff"></div>
<div style="left:937px;top:645px;width:2px;height:2px;background:#808080"></div>
<div style="left:671px;top:270px;width:267px;height:317px;background:#D4D0C8;border:1px solid;border-color:#D4D0C8 #404040 #404040 #D4D0C8;box-shadow:inset 1px 1px 0 #fff, inset -1px -1px 0 #808080"></div>
<div style="left:675px;top:274px;width:259px;height:15px;background:linear-gradient(to right,#0A246A 0%,#A6CAF0 100%)"></div>
<div class="t thb" style="top:276px;color:#fff;left:677px;transform:scaleX(0.9980);">Změna kvalifikace</div>
<div class="btn" style="left:922px;top:276px;width:11px;height:11px;"></div>
<svg style="left:924px;top:278px" width="6" height="6" viewBox="0 0 6 6"><path d="M0.3 0.3 L5.7 5.7 M5.7 0.3 L0.3 5.7" stroke="#000" stroke-width="1"/></svg>
<div class="t ms" style="top:302px;left:690px;transform:scaleX(0.8693);">Uživatel:</div>
<div class="blur" style="left:755px;top:304px;width:27px;height:10px;background:repeating-linear-gradient(90deg,#B0AEA8 0,#C4C1BA 3px,#B0AEA8 7px);"></div>
<div class="t ms" style="top:302px;left:785px;transform:scaleX(0.8522);">Daniel</div>
<div class="t ms" style="top:321px;left:690px;transform:scaleX(0.8674);">Stanoviště:</div>
<div class="t ms" style="top:321px;left:757px;transform:scaleX(0.8936);">SILVERBOX</div>
<div class="sunk" style="left:678px;top:340px;width:250px;height:192px;background:#fff;"></div>
<div class="hdr" style="left:680px;top:342px;width:60px;height:17px;"></div>
<div class="t ms" style="top:344px;left:686px;transform:scaleX(0.9050);">Pořadí</div>
<div class="hdr" style="left:740px;top:342px;width:182px;height:17px;"></div>
<div class="t ms" style="top:344px;left:746px;transform:scaleX(0.9158);">Název kvalifikační úrovně</div>
<div class="hdr" style="left:922px;top:342px;width:4px;height:17px;"></div>
<div class="t ms" style="top:359px;left:686px;transform:scaleX(0.8950);">0</div>
<div class="t ms" style="top:359px;left:746px;transform:scaleX(0.8950);">Nezaškolen</div>
<div style="left:684px;top:373px;width:56px;height:14px;background:#F5E90F"></div>
<div class="t ms" style="top:373px;left:686px;transform:scaleX(0.8950);">1</div>
<div class="t ms" style="top:373px;left:746px;transform:scaleX(0.8950);">Práce s dohledem</div>
<div style="left:684px;top:387px;width:56px;height:14px;background:#08E010"></div>
<div class="t ms" style="top:387px;left:686px;transform:scaleX(0.8950);">2</div>
<div class="t ms" style="top:387px;left:746px;transform:scaleX(0.8950);">Práce samostatně</div>
<div style="left:684px;top:401px;width:56px;height:14px;background:#DE3014"></div>
<div class="t ms" style="top:401px;left:686px;transform:scaleX(0.8950);">3</div>
<div class="t ms" style="top:401px;left:746px;transform:scaleX(0.8950);">Může trénovat</div>
<div style="left:771px;top:553px;width:75px;height:23px;background:#D4D0C8;border:1px solid #000;box-shadow:inset 1px 1px 0 #fff, inset -1px -1px 0 #404040, inset -2px -2px 0 #808080"></div>
<div class="t ms c" style="top:558px;left:771px;width:75px;transform:scaleX(0.8950);">OK</div>
<div class="btn" style="left:852px;top:553px;width:75px;height:23px;"></div>
<div class="t ms c" style="top:558px;left:852px;width:75px;transform:scaleX(0.8950);">Cancel</div>
</body></html>
